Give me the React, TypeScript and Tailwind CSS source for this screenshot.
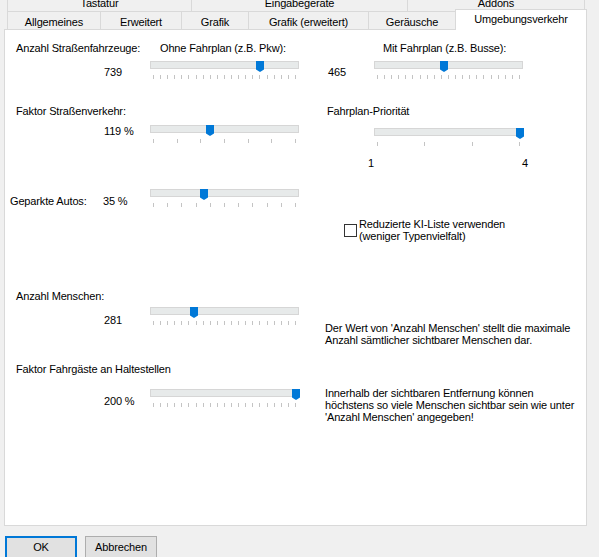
type SliderProps = {
  value: number;
  ticks: number;
  className?: string;
};

function Slider({ value, ticks, className }: SliderProps) {
  return (
    <div className={`w-[149px] shrink-0 ${className ?? ''}`}>
      <div className="relative h-[11px]">
        <div className="mt-px h-[8px] border border-[#d6d6d6] bg-[#e7eaea]" />
        <svg
          className="absolute top-0"
          style={{ left: Math.round(value * 142) }}
          width="8"
          height="11"
          viewBox="0 0 8 11"
        >
          <path d="M0 0H8V8.5L4 11L0 8.5Z" fill="#0078d7" />
        </svg>
      </div>
      <div className="mt-[3px] flex h-[4px] justify-between px-[3px]">
        {Array.from({ length: ticks }).map((_, i) => (
          <span key={i} className="w-px bg-[#c4c4c4]" />
        ))}
      </div>
    </div>
  );
}

const backTabs = [
  { label: 'Tastatur', w: 'w-[184px]' },
  { label: 'Eingabegeräte', w: 'w-[216px]' },
  { label: 'Addons', w: 'w-[178px] border-r' },
];

const frontTabs = [
  { label: 'Allgemeines', w: 'w-[93px]' },
  { label: 'Erweitert', w: 'w-[81px]' },
  { label: 'Grafik', w: 'w-[67px]' },
  { label: 'Grafik (erweitert)', w: 'w-[120px]' },
  { label: 'Geräusche', w: 'w-[87px]' },
];

export default function App() {
  return (
    <div className="flex h-[557px] w-[599px] flex-col overflow-hidden bg-[#f0f0f0] font-['Liberation_Sans',Arial,sans-serif] text-[11px] leading-[13px] tracking-[-0.15px] whitespace-nowrap text-black">
      {/* tab strip */}
      <div className="flex h-[29px] shrink-0 flex-col">
        <div className="-mt-[8px] ml-[7px] flex h-[19px] shrink-0">
          {backTabs.map((tab) => (
            <div
              key={tab.label}
              className={`${tab.w} border-l border-[#d9d9d9] pt-[5px] text-center`}
            >
              {tab.label}
            </div>
          ))}
        </div>
        <div className="ml-[7px] flex h-[18px] shrink-0">
          {frontTabs.map((tab) => (
            <div
              key={tab.label}
              className={`${tab.w} border-l border-t border-[#d9d9d9] pt-[4px] text-center`}
            >
              {tab.label}
            </div>
          ))}
          <div className="relative z-10 -mt-[2px] h-[21px] w-[132px] border-l border-r border-t border-[#d9d9d9] bg-white pt-[3px] text-center">
            Umgebungsverkehr
          </div>
        </div>
      </div>

      {/* page */}
      <div className="ml-[4px] h-[497px] w-[583px] shrink-0 border border-[#d9d9d9] bg-white">
        <div className="mt-[12px] flex">
          <div className="w-[155px] pl-[11px]">Anzahl Straßenfahrzeuge:</div>
          <div className="w-[223px]">Ohne Fahrplan (z.B. Pkw):</div>
          <div>Mit Fahrplan (z.B. Busse):</div>
        </div>
        <div className="mt-[5px] flex items-start">
          <div className="w-[145px] shrink-0 pl-[99px] pt-[6px]">739</div>
          <Slider value={0.743} ticks={21} />
          <div className="w-[75px] shrink-0 pl-[29px] pt-[6px]">465</div>
          <Slider value={0.465} ticks={21} />
        </div>

        <div className="mt-[26px] flex">
          <div className="w-[322px] pl-[11px]">Faktor Straßenverkehr:</div>
          <div>Fahrplan-Priorität</div>
        </div>
        <div className="mt-[6px] flex items-start">
          <div className="w-[145px] shrink-0 pl-[99px] pt-px">119 %</div>
          <Slider value={0.394} ticks={7} />
          <div className="w-[75px] shrink-0" />
          <div className="mt-[3px]">
            <Slider value={1} ticks={4} />
            <div className="-ml-[6px] mt-[11px] flex w-[160px] justify-between">
              <span>1</span>
              <span>4</span>
            </div>
          </div>
        </div>

        <div className="mt-[18px] flex items-start">
          <div className="flex w-[145px] shrink-0 pl-[5px] pt-[7px]">
            <span className="w-[93px]">Geparkte Autos:</span>
            <span>35 %</span>
          </div>
          <Slider value={0.352} ticks={11} />
        </div>

        <div className="ml-[339px] mt-[10px] flex items-start">
          <div className="mt-[6px] h-[13px] w-[13px] shrink-0 border border-[#333333] bg-white" />
          <div className="ml-[2px] leading-[12px]">
            Reduzierte KI-Liste verwenden
            <br />
            (weniger Typenvielfalt)
          </div>
        </div>

        <div className="mt-[48px] pl-[11px]">Anzahl Menschen:</div>
        <div className="mt-[3px] flex items-start">
          <div className="w-[145px] shrink-0 pl-[99px] pt-[8px]">281</div>
          <Slider value={0.282} ticks={21} />
          <div className="pl-[26px] pt-[16px] leading-[12px]">
            Der Wert von 'Anzahl Menschen' stellt die maximale
            <br />
            Anzahl sämtlicher sichtbarer Menschen dar.
          </div>
        </div>

        <div className="mt-[17px] pl-[11px]">Faktor Fahrgäste an Haltestellen</div>
        <div className="mt-[11px] flex items-start">
          <div className="w-[145px] shrink-0 pl-[99px] pt-[8px]">200 %</div>
          <Slider value={1} ticks={21} className="mt-px" />
          <div className="pl-[26px] leading-[12px]">
            Innerhalb der sichtbaren Entfernung können
            <br />
            höchstens so viele Menschen sichtbar sein wie unter
            <br />
            'Anzahl Menschen' angegeben!
          </div>
        </div>
      </div>

      {/* buttons */}
      <div className="ml-[5px] mt-[10px] flex shrink-0 gap-[8px]">
        <button className="h-[23px] w-[72px] border-2 border-[#0078d7] bg-[#e1e1e1]">OK</button>
        <button className="h-[23px] w-[72px] border border-[#adadad] bg-[#e1e1e1]">Abbrechen</button>
      </div>
    </div>
  );
}
